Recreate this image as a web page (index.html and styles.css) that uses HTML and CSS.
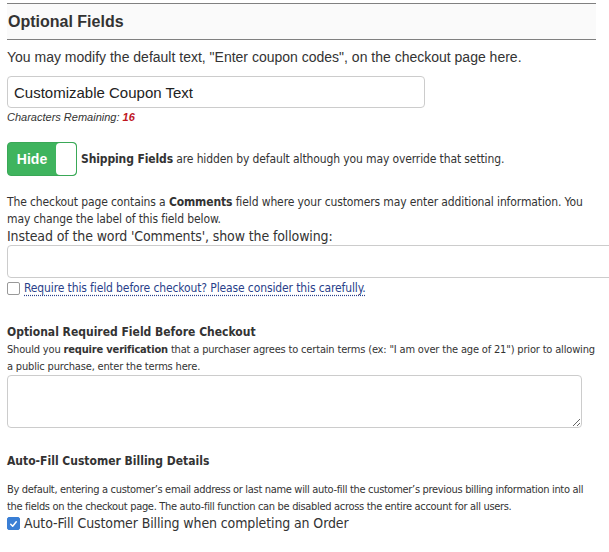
FILE: index.html
```html
<!DOCTYPE html>
<html>
<head>
<meta charset="utf-8">
<link rel="stylesheet" href="styles.css">
</head>
<body>
<div class="page">
  <h2 class="section-title">Optional Fields</h2>
  <p class="lead">You may modify the default text, "Enter coupon codes", on the checkout page here.</p>
  <input class="text-input coupon" type="text" value="Customizable Coupon Text">
  <div class="remaining">Characters Remaining: <b>16</b></div>

  <div class="toggle-row">
    <span class="toggle"><span class="toggle-label">Hide</span><span class="knob"></span></span>
    <span class="small-text"><b>Shipping Fields</b> are hidden by default although you may override that setting.</span>
  </div>

  <p class="small-text para comments-para">The checkout page contains a <b>Comments</b> field where your customers may enter additional information. You may change the label of this field below.</p>
  <div class="big-label">Instead of the word 'Comments', show the following:</div>
  <input class="text-input wide" type="text">
  <label class="check-row">
    <span class="checkbox"></span>
    <span class="link">Require this field before checkout? Please consider this carefully.</span>
  </label>

  <h3 class="sub-title req-title">Optional Required Field Before Checkout</h3>
  <p class="tiny-text para">Should you <b>require verification</b> that a purchaser agrees to certain terms (ex: "I am over the age of 21") prior to allowing a public purchase, enter the terms here.</p>
  <textarea class="terms"></textarea>

  <h3 class="sub-title auto-title">Auto-Fill Customer Billing Details</h3>
  <p class="tiny-text para auto-para">By default, entering a customer’s email address or last name will auto-fill the customer’s previous billing information into all the fields on the checkout page. The auto-fill function can be disabled across the entire account for all users.</p>
  <label class="check-row checked-row">
    <span class="checkbox checked"><svg viewBox="0 0 12 12" width="12" height="12"><path d="M3 6.3 L5.1 8.5 L9 3.6" fill="none" stroke="#fff" stroke-width="1.6" stroke-linecap="round" stroke-linejoin="round"/></svg></span>
    <span class="big-label">Auto-Fill Customer Billing when completing an Order</span>
  </label>
</div>
</body>
</html>
```

FILE: styles.css
```css
html, body {
  margin: 0;
  padding: 0;
  background: #fff;
}

.page {
  padding: 3px 13px 0 7px;
  color: #333;
  font-family: "Liberation Sans", Arial, sans-serif;
}

.section-title {
  margin: 0;
  border-top: 1px solid #808080;
  border-bottom: 1px solid #808080;
  background: #fafafa;
  font-size: 16px;
  font-weight: bold;
  line-height: 35px;
  height: 35px;
  padding-left: 1px;
  color: #333;
}

.lead {
  margin: 8px 0 0;
  font-size: 14px;
  line-height: 18px;
  color: #333;
}

.text-input {
  display: block;
  box-sizing: border-box;
  border: 1px solid #ccc;
  border-radius: 4px;
  background: #fff;
  outline: none;
  font-family: "Liberation Sans", Arial, sans-serif;
}

.coupon {
  margin-top: 10px;
  width: 418px;
  height: 32px;
  padding: 0 6px;
  font-size: 15px;
  color: #222;
}

.remaining {
  margin-top: 2px;
  font-size: 11px;
  font-style: italic;
  line-height: 14px;
  color: #333;
}

.remaining b {
  color: #c0161e;
}

.small-text {
  font-family: "DejaVu Sans Condensed", "DejaVu Sans", sans-serif;
  font-stretch: condensed;
  font-size: 12px;
  letter-spacing: -0.12px;
  color: #333;
}

.tiny-text {
  font-family: "DejaVu Sans Condensed", "DejaVu Sans", sans-serif;
  font-stretch: condensed;
  font-size: 11px;
  letter-spacing: -0.17px;
  color: #333;
}

.toggle-row {
  display: flex;
  align-items: center;
  gap: 4px;
  margin-top: 18px;
}

.toggle {
  display: flex;
  width: 70px;
  height: 34px;
  box-sizing: border-box;
  border-radius: 4px;
  background: #3fb45e;
  border: 1px solid #3aa857;
  overflow: hidden;
}

.toggle-label {
  flex: 1;
  color: #fff;
  font-weight: bold;
  font-size: 14px;
  line-height: 32px;
  text-align: center;
  font-family: "Liberation Sans", Arial, sans-serif;
}

.knob {
  width: 20px;
  background: #fff;
  border-radius: 4px;
}

.para {
  margin: 0;
  line-height: 17px;
}

.comments-para {
  margin-top: 18px;
}

.big-label {
  font-family: "DejaVu Sans Condensed", "DejaVu Sans", sans-serif;
  font-stretch: condensed;
  font-size: 14px;
  letter-spacing: -0.12px;
  line-height: 17px;
  color: #333;
}

.wide {
  margin-top: 0;
  width: 620px;
  height: 33px;
}

.check-row {
  display: flex;
  align-items: center;
  gap: 4px;
  margin-top: 3px;
}

.checkbox {
  width: 11px;
  height: 11px;
  border: 1px solid #999;
  border-radius: 2px;
  background: #fff;
  display: flex;
  align-items: center;
  justify-content: center;
}

.checkbox.checked {
  background: #3a7fd5;
  border-color: #3a7fd5;
}

.link {
  font-family: "DejaVu Sans Condensed", "DejaVu Sans", sans-serif;
  font-stretch: condensed;
  font-size: 12px;
  letter-spacing: -0.12px;
  color: #2a3f8a;
  text-decoration: underline dotted #2a3f8a;
  text-underline-offset: 3px;
}

.sub-title {
  margin: 0;
  font-family: "DejaVu Sans Condensed", "DejaVu Sans", sans-serif;
  font-stretch: condensed;
  font-size: 12px;
  font-weight: bold;
  line-height: 17px;
  color: #333;
}

.req-title {
  margin-top: 29px;
}

.terms {
  display: block;
  box-sizing: border-box;
  width: 575px;
  height: 53px;
  margin-top: 0;
  border: 1px solid #ccc;
  border-radius: 4px;
  resize: vertical;
}

.auto-title {
  margin-top: 25px;
}

.auto-para {
  margin-top: 11px;
  letter-spacing: -0.32px;
}

.checked-row {
  margin-top: 0;
}
```
